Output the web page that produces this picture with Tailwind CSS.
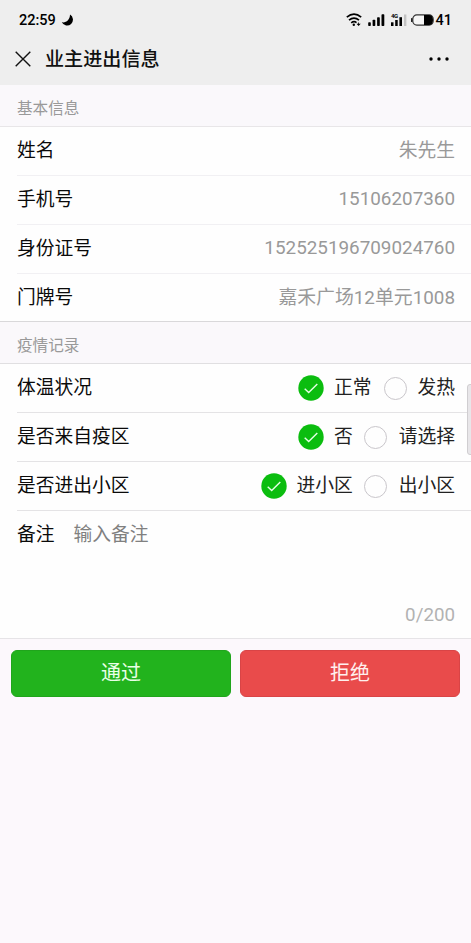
<!DOCTYPE html>
<html lang="zh-CN">
<head>
<meta charset="utf-8">
<title>业主进出信息</title>
<script src="https://cdn.jsdelivr.net/npm/@tailwindcss/browser@4"></script>
</head>
<body class="bg-[#fcf8fc] font-['Roboto','Noto_Sans_CJK_SC',sans-serif] text-[18.75px] text-[#0a0a0a]">
<div class="relative flex h-[943px] w-[471px] flex-col overflow-hidden">
  <header class="h-[85px] shrink-0 bg-[#eeeeee]">
    <div class="flex h-[40px] items-center pl-[19px] pr-[19px] text-[14.5px] font-medium leading-none text-black">
      <span class="pt-[2px]">22:59</span>
      <svg class="ml-[5px]" width="14" height="14" viewBox="0 0 14 14"><path d="M9 1.500A5.900 5.900 0 1 1 .8 9.300C5 10.200 9 6.800 9 1.500Z" fill="#000"/></svg>
      <svg class="ml-auto" width="88" height="16" viewBox="0 0 88 16">
        <g fill="none" stroke="#000" stroke-width="1.700">
          <path d="M.8 5.200Q8 -.9 15.200 5.200M3 8.200Q8 4.100 13 8.200M5.200 10.900Q8 8.700 10.500 10.600"/>
        </g>
        <circle cx="7.800" cy="12.800" r="1.200"/><path d="M12.600 9.800l.5 2h1.600l-2.100 2.200-2.100-2.200h1.600z"/>
        <g fill="#000">
          <rect x="22.200" y="10.300" width="2.600" height="3.700" rx=".7"/><rect x="26.600" y="7.800" width="2.700" height="6.200" rx=".7"/><rect x="31.100" y="5.200" width="2.700" height="8.800" rx=".7"/><rect x="35.500" y="2.200" width="2.800" height="11.800" rx=".7"/>
          <rect x="45" y="10.300" width="2.500" height="3.700"/><rect x="49.200" y="8" width="2.500" height="6"/><rect x="53.400" y="5.200" width="2.600" height="8.800"/>
        </g>
        <rect x="58" y="2.500" width="2.400" height="11.500" fill="#c2c2c2"/>
        <text x="45" y="6.200" font-size="6" font-weight="700" textLength="7">4G</text>
        <rect x="66.800" y="2.900" width="20.400" height="10.200" rx="4" fill="#f5f5f5" stroke="#333" stroke-width="1.200"/><path d="M78 3h5q4 0 4 5t-4 5h-5z"/><rect x="65" y="6" width="1.500" height="4" rx=".6" fill="#222"/>
      </svg>
      <span class="ml-[2px] pt-[2px]">41</span>
    </div>
    <div class="flex h-[37px] items-center pl-[15px] pr-[22px]">
      <svg width="16" height="16" viewBox="0 0 16 16" fill="none" stroke="#111" stroke-width="1.400"><path d="M.7.700l14.600 14.600M15.300.700L.7 15.300"/></svg>
      <h1 class="ml-[14px] pt-[2px] text-[19.1px] font-medium leading-[28px] text-[#111]">业主进出信息</h1>
      <svg class="ml-auto" width="20" height="4" viewBox="0 0 20 4"><circle cx="2" cy="2" r="1.700"/><circle cx="10" cy="2" r="1.700"/><circle cx="18" cy="2" r="1.700"/></svg>
    </div>
  </header>

  <h2 class="h-[42px] shrink-0 border-b border-[#e8e6e8] bg-[#faf8fb] pl-[17px] pt-[11px] text-[15.600px] leading-[26px] text-[#999]">基本信息</h2>
  <section class="shrink-0 border-b border-[#d9d8da] bg-[#fefefe] pl-[17px] leading-[28px]">
    <div class="flex h-[49px] justify-between border-b border-[#f1f0f3] pr-4 pt-[10px]"><span>姓名</span><span class="text-[#999]">朱先生</span></div>
    <div class="flex h-[49px] justify-between border-b border-[#f1f0f3] pr-4 pt-[10px]"><span>手机号</span><span class="-mt-px text-[18.850px] text-[#999]">15106207360</span></div>
    <div class="flex h-[49px] justify-between border-b border-[#f1f0f3] pr-4 pt-[10px]"><span>身份证号</span><span class="-mt-px text-[18.850px] text-[#999]">152525196709024760</span></div>
    <div class="flex h-[47px] justify-between pr-4 pt-[10px]"><span>门牌号</span><span class="text-[18.850px] text-[#999]">嘉禾广场12单元1008</span></div>
  </section>

  <h2 class="h-[42px] shrink-0 border-b border-[#e0dfe1] bg-[#faf8fb] pl-[17px] pt-[11px] text-[15.600px] leading-[26px] text-[#999]">疫情记录</h2>
  <section class="h-[275px] shrink-0 border-b border-[#e6e4e7] bg-[#fefefe] pl-[17px] leading-[28px]">
    <div class="flex h-[49px] border-b border-[#e4e3e5] pr-4 pt-[10px]">
      <span class="mr-auto">体温状况</span>
      <svg class="mt-[1px]" width="26" height="26" viewBox="0 0 26 26"><circle cx="13" cy="13" r="12.700" fill="#0bbd0f"/><path d="M6.700 13.700l4 3.900 8.600-8.700" fill="none" stroke="#e5ffe5" stroke-width="1.400"/></svg>
      <span class="ml-[10px] text-[#222]">正常</span>
      <span class="ml-[12px] mr-px mt-[3px] size-[23px] rounded-full border border-[#c9c6cb]"></span>
      <span class="ml-[10px] text-[#222]">发热</span>
    </div>
    <div class="flex h-[49px] border-b border-[#e4e3e5] pr-4 pt-[10px]">
      <span class="mr-auto">是否来自疫区</span>
      <svg class="mt-[1px]" width="26" height="26" viewBox="0 0 26 26"><circle cx="13" cy="13" r="12.700" fill="#0bbd0f"/><path d="M6.700 13.700l4 3.900 8.600-8.700" fill="none" stroke="#e5ffe5" stroke-width="1.400"/></svg>
      <span class="ml-[10px] text-[#222]">否</span>
      <span class="ml-[11px] mr-px mt-[3px] size-[23px] rounded-full border border-[#c9c6cb]"></span>
      <span class="ml-[11px] text-[#222]">请选择</span>
    </div>
    <div class="flex h-[49px] border-b border-[#e4e3e5] pr-4 pt-[10px]">
      <span class="mr-auto">是否进出小区</span>
      <svg class="mt-[1px]" width="26" height="26" viewBox="0 0 26 26"><circle cx="13" cy="13" r="12.700" fill="#0bbd0f"/><path d="M6.700 13.700l4 3.900 8.600-8.700" fill="none" stroke="#e5ffe5" stroke-width="1.400"/></svg>
      <span class="ml-[10px] text-[#222]">进小区</span>
      <span class="ml-[11px] mr-px mt-[3px] size-[23px] rounded-full border border-[#c9c6cb]"></span>
      <span class="ml-[11px] text-[#222]">出小区</span>
    </div>
    <div class="flex h-[80px] pt-[10px]"><span>备注</span><span class="ml-[19px] text-[#808080]">输入备注</span></div>
    <div class="pr-4 pt-[10px] text-right text-[#b2b2b2]">0/200</div>
  </section>

  <div class="flex gap-[9px] pl-[11px] pr-[11px] pt-[11px]">
    <button class="h-[47px] flex-1 rounded-[6px] border border-[#20a51c] bg-[#22b31d] pb-[1px] text-[20px] leading-none text-[#e9ffe7]">通过</button>
    <button class="h-[47px] flex-1 rounded-[6px] border border-[#d94446] bg-[#e94b4b] pb-[1px] text-[20px] leading-none text-[#fff0ee]">拒绝</button>
  </div>
  <div class="absolute right-[-3px] top-[384px] h-[71px] w-[7px] rounded-[3px] border border-[#d0ced1] bg-[#e8e6e9]"></div>
</div>
</body>
</html>
